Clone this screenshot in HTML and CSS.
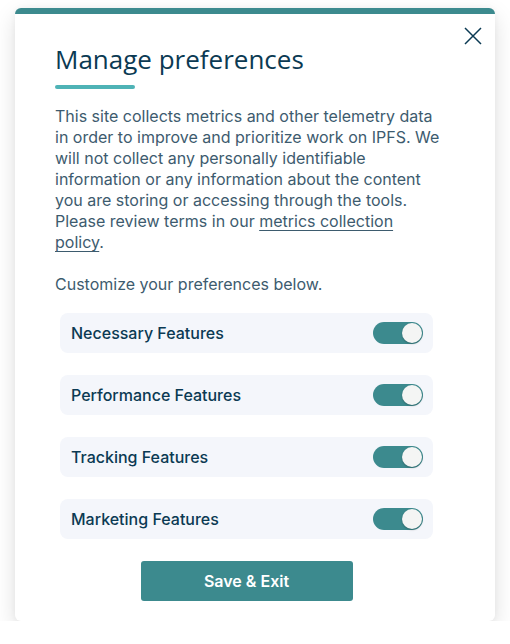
FILE: index.html
```html
<!DOCTYPE html>
<html lang="en">
<head>
<meta charset="utf-8">
<title>Manage preferences</title>
<link rel="stylesheet" href="styles.css">
</head>
<body>
<div class="modal">
  <button class="close" aria-label="Close">
    <svg width="18" height="18" viewBox="0 0 18 18"><path d="M1 1 L17 17 M17 1 L1 17" stroke="#0b3a53" stroke-width="1.5" fill="none"/></svg>
  </button>
  <h1 class="title">Manage preferences</h1>
  <div class="title-bar"></div>
  <p class="text">This site collects metrics and other telemetry data in order to improve and prioritize work on IPFS. We will not collect any personally identifiable information or any information about the content you are storing or accessing through the tools. Please review terms in our <a href="#">metrics collection policy</a>.</p>
  <p class="text sub">Customize your preferences below.</p>
  <div class="options">
    <div class="row"><span class="label">Necessary Features</span><span class="toggle"><span class="knob"></span></span></div>
    <div class="row"><span class="label">Performance Features</span><span class="toggle"><span class="knob"></span></span></div>
    <div class="row"><span class="label">Tracking Features</span><span class="toggle"><span class="knob"></span></span></div>
    <div class="row"><span class="label">Marketing Features</span><span class="toggle"><span class="knob"></span></span></div>
    <button class="save">Save &amp; Exit</button>
  </div>
</div>
</body>
</html>
```
FILE: styles.css
```css
* { box-sizing: border-box; }
html, body { margin: 0; padding: 0; background: #fff; }
body { padding: 8px 15px 0; font-family: Inter, "Noto Sans", sans-serif; }
.modal {
  position: relative;
  width: 480px;
  height: 613px;
  background: #fff;
  border-top: 6px solid #3c8a8e;
  border-radius: 6px;
  box-shadow: 0 8px 22px rgba(0,0,0,0.13), 0 0 6px rgba(0,0,0,0.04);
  padding: 29px 62px 20px 40px;
}
.close {
  position: absolute;
  top: 13px;
  right: 13px;
  width: 18px;
  height: 18px;
  padding: 0;
  border: 0;
  background: none;
  cursor: pointer;
}
.close svg { display: block; }
.title {
  margin: 0;
  font-family: "Open Sans", sans-serif;
  font-weight: 400;
  font-size: 26px;
  line-height: 32px;
  color: #0b3a53;
  letter-spacing: 0;
}
.title-bar {
  width: 80px;
  height: 4px;
  border-radius: 2px;
  background: #4fb3b6;
  margin-top: 10px;
}
.text {
  margin: 17px -12px 0 0;
  font-size: 16px;
  line-height: 21px;
  color: #3d5b6e;
}
.text a { color: #3d5b6e; text-decoration: underline; text-underline-offset: 3px; text-decoration-thickness: 1px; }
.text.sub { margin-top: 21px; }
.options {
  margin: 18px 0 0 5px;
  width: 373px;
  display: flex;
  flex-direction: column;
  gap: 22px;
}
.row {
  height: 40px;
  background: #f4f6fb;
  border-radius: 8px;
  display: flex;
  align-items: center;
  justify-content: space-between;
  padding: 0 10px 0 11px;
}
.label { font-size: 16px; font-weight: 500; color: #0b3a53; }
.toggle {
  width: 50px;
  height: 22px;
  border-radius: 11px;
  background: #3c8a8e;
  display: flex;
  align-items: center;
  justify-content: flex-end;
  padding-right: 1px;
}
.knob {
  width: 20px;
  height: 20px;
  border-radius: 50%;
  background: #f4f5f4;
  box-shadow: 0 1px 2px rgba(0,0,0,0.25);
}
.save {
  align-self: center;
  width: 212px;
  height: 40px;
  border: 0;
  border-radius: 3px;
  background: #3c8a8e;
  color: #fff;
  font-family: Inter, sans-serif;
  font-weight: 600;
  font-size: 16px;
  cursor: pointer;
}
```
